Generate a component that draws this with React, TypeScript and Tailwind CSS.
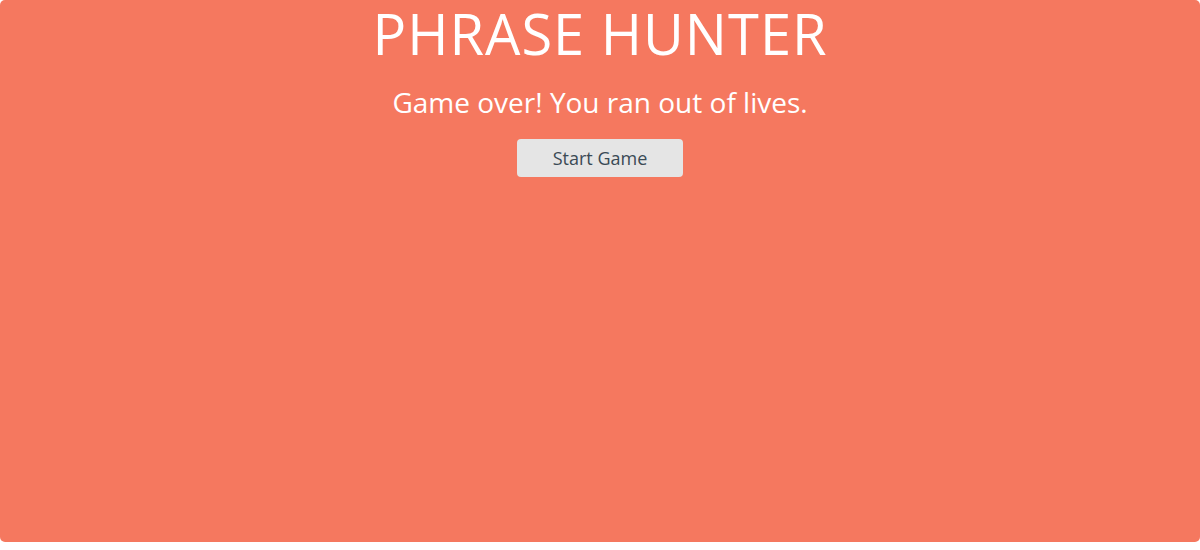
export default function App() {
  return (
    <div className="h-[550px] w-[1200px] bg-white">
      <div className="flex h-[542px] flex-col items-center rounded-[5px] bg-[#f5785f] font-['Open_Sans',sans-serif] text-white">
        <h1 className="mt-[3px] text-[56px] font-normal leading-[60px] tracking-[1px]">PHRASE HUNTER</h1>
        <h2 className="mt-[22px] text-[28px] font-normal leading-[34px]">Game over! You ran out of lives.</h2>
        <button className="mt-[20px] h-[38px] w-[166px] rounded-[4px] bg-[#e5e5e5] text-[18px] text-[#3a4a55]">
          Start Game
        </button>
      </div>
    </div>
  );
}
